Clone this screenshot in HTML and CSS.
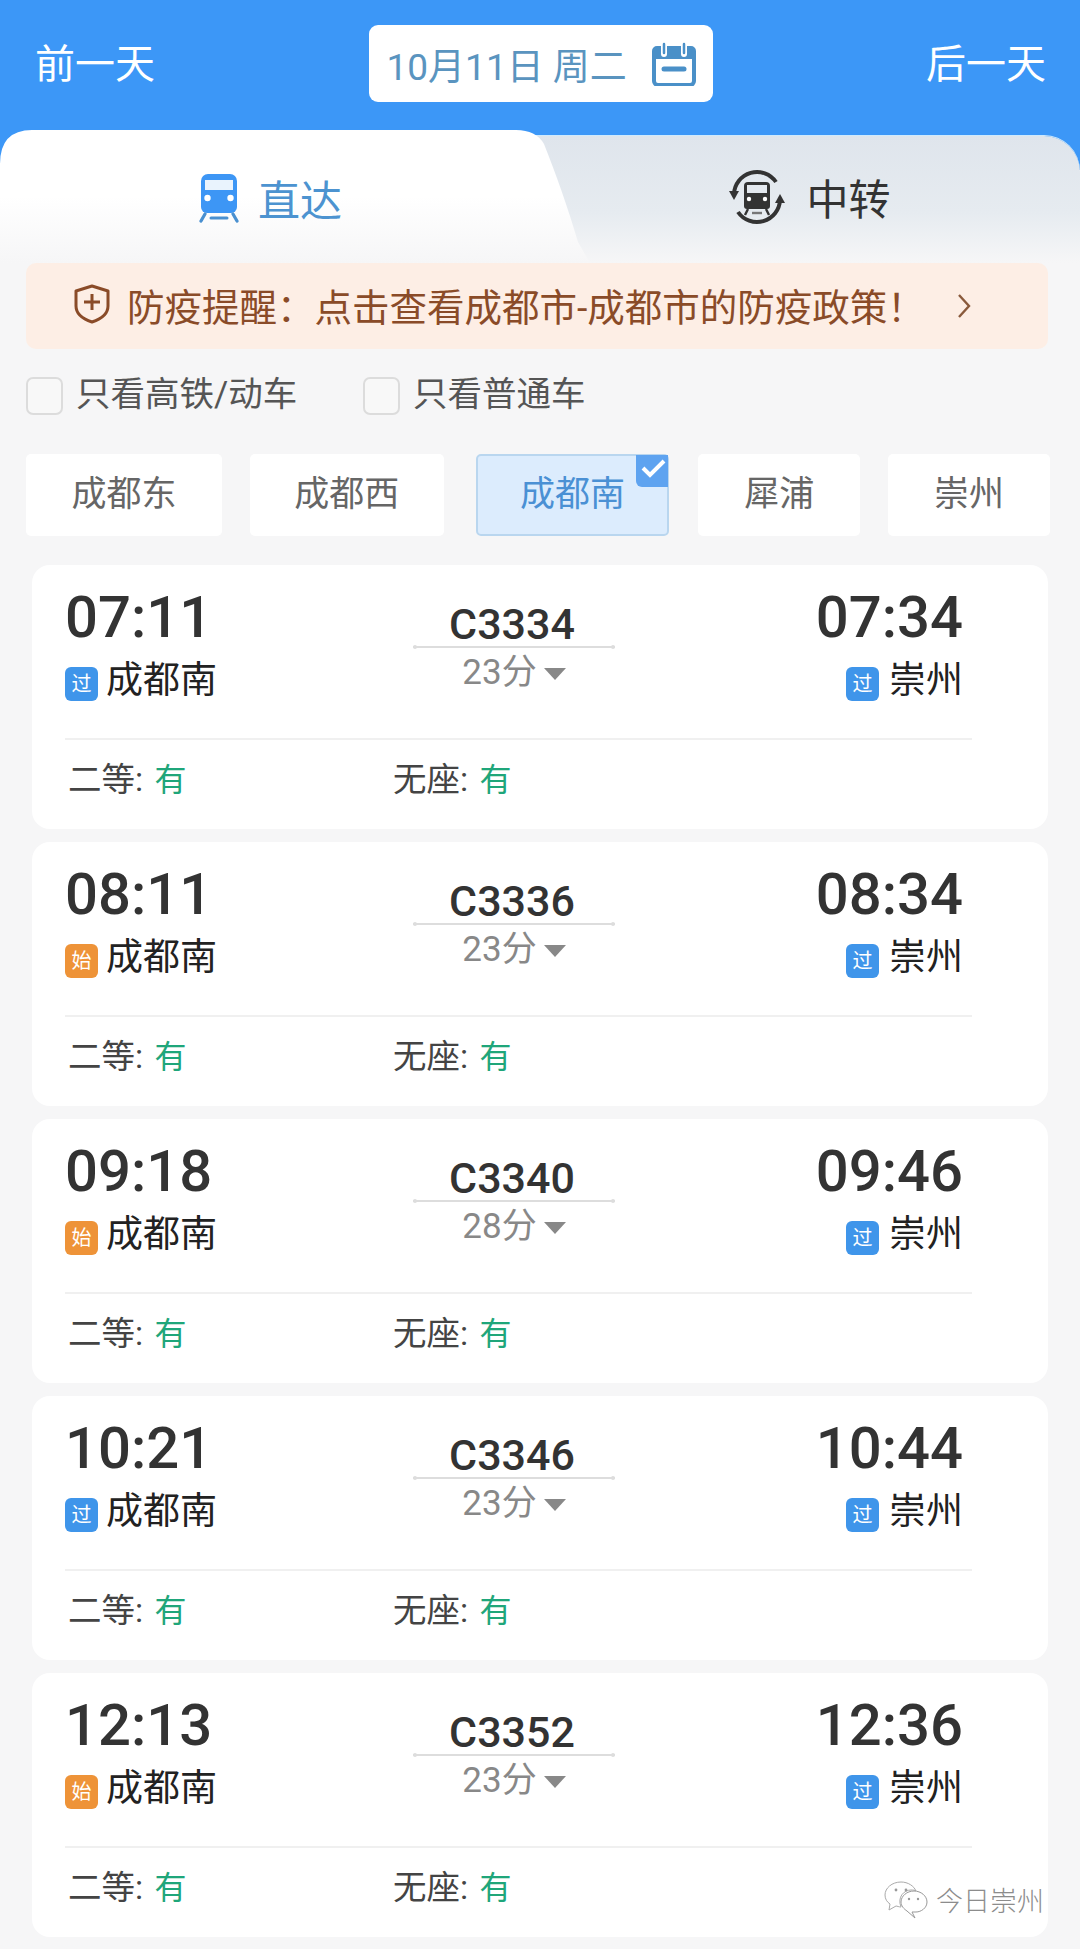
FILE: index.html
```html
<!DOCTYPE html>
<html lang="zh-CN">
<head>
    <meta charset="utf-8">
    <title>成都市-崇州 车次列表</title>
    <meta name="viewport" content="width=device-width, initial-scale=1">
    <link rel="stylesheet" href="styles.css">
</head>
<body>
    <header class="topbar">
        <span class="day-link">前一天</span>
        <div class="date-box">
            <span>10月11日 周二</span>
            <svg class="date-icon" viewBox="0 0 44 44" aria-hidden="true">
                <path d="M2 9a3 3 0 0 1 3-3h34a3 3 0 0 1 3 3v30a4 4 0 0 1-4 4H6a4 4 0 0 1-4-4z" fill="none" stroke="#4a90c8" stroke-width="4"/>
                <path d="M2 8h40v9H2z" fill="#4a90c8"/>
                <path d="M12 1v11M32 1v11" stroke="#fff" stroke-width="6" stroke-linecap="round"/>
                <path d="M12 2v9M32 2v9" stroke="#4a90c8" stroke-width="2.5" stroke-linecap="round"/>
                <path d="M12 27h20" stroke="#4a90c8" stroke-width="5" stroke-linecap="round"/>
            </svg>
        </div>
        <span class="day-link">后一天</span>
    </header>

    <nav class="tabs">
        <div class="tab tab-direct">
            <svg class="tab-icon-direct" viewBox="0 0 42 50" aria-hidden="true">
                <path d="M3 8a7 7 0 0 1 7-7h22a7 7 0 0 1 7 7v26a6 6 0 0 1-6 6H9a6 6 0 0 1-6-6z" fill="#3d96f5"/>
                <path d="M7 7h28v10H7z" fill="#e9f3fd"/>
                <circle cx="9.5" cy="25" r="3.2" fill="#fff"/>
                <circle cx="32.5" cy="25" r="3.2" fill="#fff"/>
                <path d="M7 41l-4 7M35 41l4 7" stroke="#4a90d0" stroke-width="3.2" stroke-linecap="round"/>
                <path d="M13 45h16" stroke="#4a90d0" stroke-width="3" stroke-linecap="round"/>
            </svg>
            <span>直达</span>
        </div>
        <div class="tab tab-transfer">
            <svg class="tab-icon-transfer" viewBox="0 0 56 56" aria-hidden="true">
                <path d="M5 25A23 23 0 0 1 47 13" fill="none" stroke="#333" stroke-width="4"/>
                <path d="M51 31A23 23 0 0 1 9 43" fill="none" stroke="#333" stroke-width="4"/>
                <path d="M0 22l5 9 5-9z" fill="#333"/>
                <path d="M46 34l5-9 5 9z" fill="#333"/>
                <path d="M15 17a4 4 0 0 1 4-4h18a4 4 0 0 1 4 4v20a3 3 0 0 1-3 3H18a3 3 0 0 1-3-3z" fill="#333"/>
                <path d="M18 16h20v8H18z" fill="#e4e9ef"/>
                <circle cx="20" cy="30" r="2.200" fill="#fff"/>
                <circle cx="36" cy="30" r="2.200" fill="#fff"/>
                <path d="M19 40l-3 6M37 40l3 6" stroke="#333" stroke-width="2.400"/>
                <path d="M23 44h10" stroke="#777" stroke-width="2.400"/>
            </svg>
            <span>中转</span>
        </div>
    </nav>

    <div class="notice">
        <svg class="notice-icon" viewBox="0 0 38 40" aria-hidden="true">
            <path d="M19 2l16 5v15c0 8-7 13-16 16C10 35 3 30 3 22V7z" fill="#fdeee5" stroke="#8a4b28" stroke-width="3" stroke-linejoin="round"/>
            <path d="M11 18h16M19 10v16" stroke="#8a4b28" stroke-width="3"/>
        </svg>
        <span class="notice-text">防疫提醒：点击查看成都市-成都市的防疫政策！</span>
        <svg class="notice-arrow" viewBox="0 0 14 26" aria-hidden="true">
            <path d="M2 2l10 11L2 24" fill="none" stroke="#8a5a3c" stroke-width="2.400"/>
        </svg>
    </div>

    <div class="filters">
        <label class="filter"><i class="checkbox"></i>只看高铁/动车</label>
        <label class="filter"><i class="checkbox"></i>只看普通车</label>
    </div>

    <div class="stations">
        <div class="station station-lg">成都东</div>
        <div class="station station-md">成都西</div>
        <div class="station station-md active">成都南
            <svg class="station-check" viewBox="0 0 32 32" aria-hidden="true">
                <path d="M0 0h32v32H6a6 6 0 0 1-6-6z" fill="#5ea3f0"/>
                <path d="M7 13l7 7L28 6" fill="none" stroke="#fff" stroke-width="4"/>
            </svg>
        </div>
        <div class="station station-sm">犀浦</div>
        <div class="station station-sm">崇州</div>
    </div>

    <main class="trains">
        <article class="train">
            <div class="route">
                <div class="stop">
                    <div class="time">07:11</div>
                    <div class="place"><b class="tag tag-pass">过</b><span>成都南</span></div>
                </div>
                <div class="middle">
                    <div class="train-no">C3334</div>
                    <div class="duration">23分<i class="caret"></i></div>
                </div>
                <div class="stop stop-end">
                    <div class="time">07:34</div>
                    <div class="place"><b class="tag tag-pass">过</b><span>崇州</span></div>
                </div>
            </div>
            <div class="seats">
                <div class="seat">二等: <em>有</em></div>
                <div class="seat">无座: <em>有</em></div>
            </div>
        </article>

        <article class="train">
            <div class="route">
                <div class="stop">
                    <div class="time">08:11</div>
                    <div class="place"><b class="tag tag-start">始</b><span>成都南</span></div>
                </div>
                <div class="middle">
                    <div class="train-no">C3336</div>
                    <div class="duration">23分<i class="caret"></i></div>
                </div>
                <div class="stop stop-end">
                    <div class="time">08:34</div>
                    <div class="place"><b class="tag tag-pass">过</b><span>崇州</span></div>
                </div>
            </div>
            <div class="seats">
                <div class="seat">二等: <em>有</em></div>
                <div class="seat">无座: <em>有</em></div>
            </div>
        </article>

        <article class="train">
            <div class="route">
                <div class="stop">
                    <div class="time">09:18</div>
                    <div class="place"><b class="tag tag-start">始</b><span>成都南</span></div>
                </div>
                <div class="middle">
                    <div class="train-no">C3340</div>
                    <div class="duration">28分<i class="caret"></i></div>
                </div>
                <div class="stop stop-end">
                    <div class="time">09:46</div>
                    <div class="place"><b class="tag tag-pass">过</b><span>崇州</span></div>
                </div>
            </div>
            <div class="seats">
                <div class="seat">二等: <em>有</em></div>
                <div class="seat">无座: <em>有</em></div>
            </div>
        </article>

        <article class="train">
            <div class="route">
                <div class="stop">
                    <div class="time">10:21</div>
                    <div class="place"><b class="tag tag-pass">过</b><span>成都南</span></div>
                </div>
                <div class="middle">
                    <div class="train-no">C3346</div>
                    <div class="duration">23分<i class="caret"></i></div>
                </div>
                <div class="stop stop-end">
                    <div class="time">10:44</div>
                    <div class="place"><b class="tag tag-pass">过</b><span>崇州</span></div>
                </div>
            </div>
            <div class="seats">
                <div class="seat">二等: <em>有</em></div>
                <div class="seat">无座: <em>有</em></div>
            </div>
        </article>

        <article class="train">
            <div class="route">
                <div class="stop">
                    <div class="time">12:13</div>
                    <div class="place"><b class="tag tag-start">始</b><span>成都南</span></div>
                </div>
                <div class="middle">
                    <div class="train-no">C3352</div>
                    <div class="duration">23分<i class="caret"></i></div>
                </div>
                <div class="stop stop-end">
                    <div class="time">12:36</div>
                    <div class="place"><b class="tag tag-pass">过</b><span>崇州</span></div>
                </div>
            </div>
            <div class="seats">
                <div class="seat">二等: <em>有</em></div>
                <div class="seat">无座: <em>有</em></div>
            </div>
            <div class="watermark">
                <svg class="watermark-icon" viewBox="0 0 44 38" aria-hidden="true">
                    <path d="M17 1C8 1 1 7 1 14c0 4 2 7 5 9l-1 6 7-4c1 0 3 1 5 1" fill="#fff" stroke="#aaa" stroke-width="1"/>
                    <path d="M17 26C13 16 20 9 27 9c2 0 4 0 5 1C30 5 24 1 17 1" fill="#fff" stroke="#aaa" stroke-width="1"/>
                    <path d="M30 10c7 0 13 5 13 11s-6 10-11 10c-1 0-3 0-4 0l3 6-8-7c-3-2-6-5-6-9 0-6 6-11 13-11z" fill="#fff" stroke="#999" stroke-width="1"/>
                    <circle cx="12" cy="9" r="1.400" fill="#999"/>
                    <circle cx="22" cy="9" r="1.400" fill="#999"/>
                    <circle cx="25" cy="18" r="1.200" fill="#999"/>
                    <circle cx="34" cy="18" r="1.200" fill="#999"/>
                </svg>
                <span>今日崇州</span>
            </div>
        </article>
    </main>
</body>
</html>
```
FILE: styles.css
```css
html, body {
    margin: 0;
    padding: 0;
}
body {
    width: 1080px;
    background-color: #f6f6f7;
    font-family: Roboto, "Noto Sans CJK SC", sans-serif;
    color: #333333;
}

/* top bar */
.topbar {
    display: flex;
    justify-content: space-between;
    box-sizing: border-box;
    height: 170px;
    padding: 25px 34px 0 35px;
    background-color: #3c97f7;
}
.day-link {
    height: 77px;
    line-height: 79px;
    font-size: 40px;
    color: #ffffff;
}
.date-box {
    display: flex;
    align-items: center;
    justify-content: space-between;
    box-sizing: border-box;
    width: 344px;
    height: 77px;
    padding: 0 17px 0 18px;
    border-radius: 9px;
    background-color: #ffffff;
    font-size: 37px;
    color: #5a94bf;
}
.date-icon {
    width: 44px;
    height: 44px;
}

/* tabs */
.tabs {
    display: grid;
    grid-template-columns: 540px 540px;
    height: 127px;
    margin-top: -34px;
    border-radius: 36px 36px 0 0;
    background: linear-gradient(#dfe5ec 0%, #e6ebf0 60%, #f6f6f7 100%);
    box-shadow: 0 -1px 0 #cfeafd;
}
.tab {
    display: flex;
    align-items: center;
    justify-content: center;
    gap: 18px;
    font-size: 42px;
}
.tab-direct {
    grid-column: 1;
    grid-row: 1;
    box-sizing: border-box;
    width: 590px;
    height: 133px;
    margin-top: -6px;
    padding: 2px 50px 0 0;
    background: linear-gradient(#ffffff 0%, #ffffff 50%, #f6f6f7 100%);
    clip-path: path("M0 34 Q0 0 32 0 H516 Q536 0 544 14 C556 44 568 78 578 112 L590 133 H0 Z");
    color: #4c93d0;
    position: relative;
}
.tab-transfer {
    grid-column: 2;
    grid-row: 1;
    gap: 21px;
    padding-bottom: 6px;
    color: #333333;
}
.tab-icon-direct {
    width: 42px;
    height: 50px;
}
.tab-icon-transfer {
    width: 56px;
    height: 56px;
}

/* notice */
.notice {
    display: flex;
    align-items: center;
    box-sizing: border-box;
    height: 86px;
    margin: 0 32px 0 26px;
    padding: 0 0 4px 47px;
    border-radius: 10px;
    background-color: #fdeee5;
    color: #8a4b28;
    font-size: 37.500px;
}
.notice-icon {
    flex: none;
    width: 38px;
    height: 40px;
    margin-right: 16px;
}
.notice-text {
    flex: none;
    width: 830px;
    white-space: nowrap;
}
.notice-arrow {
    width: 14px;
    height: 26px;
    margin-top: 4px;
}

/* filters */
.filters {
    display: flex;
    margin: 23px 0 0 26px;
}
.filter {
    display: flex;
    align-items: center;
    width: 337px;
    height: 38px;
    font-size: 34.500px;
    color: #555555;
}
.checkbox {
    flex: none;
    box-sizing: border-box;
    width: 37px;
    height: 38px;
    margin: 10px 13px 0 0;
    border: 2px solid #dcdcdc;
    border-radius: 7px;
    background-color: #f8f8f8;
}

/* station picker */
.stations {
    display: flex;
    gap: 28px;
    margin: 44px 30px 0 26px;
}
.station {
    display: flex;
    align-items: center;
    justify-content: center;
    box-sizing: border-box;
    height: 82px;
    padding-bottom: 9px;
    border-radius: 5px;
    background-color: #ffffff;
    font-size: 35px;
    color: #666666;
}
.station-lg {
    width: 196px;
}
.station-md {
    width: 194px;
}
.station-sm {
    width: 162px;
}
.station.active {
    position: relative;
    margin: 0 1px 0 4px;
    border: 2px solid #b9d6ef;
    background-color: #dcecfd;
    color: #4a90d4;
}
.station-check {
    position: absolute;
    top: -1px;
    right: -1px;
    width: 32px;
    height: 32px;
}

/* train cards */
.trains {
    display: flex;
    flex-direction: column;
    gap: 13px;
    margin: 29px 32px 0;
}
.train {
    position: relative;
    box-sizing: border-box;
    height: 264px;
    padding: 16px 76px 0 33px;
    border-radius: 18px;
    background-color: #ffffff;
}
.route {
    display: grid;
    grid-template-columns: 348px 202px 1fr;
    height: 157px;
}
.time {
    height: 66px;
    padding-top: 3px;
    line-height: 66px;
    font-size: 58px;
    font-weight: 500;
    color: #333333;
}
.place {
    display: flex;
    align-items: flex-start;
    gap: 8px;
    margin-top: 11px;
    line-height: 40px;
    font-size: 37px;
    color: #222222;
}
.stop-end {
    padding-right: 9px;
    text-align: right;
}
.stop-end .place {
    justify-content: flex-end;
    gap: 10px;
}
.tag {
    flex: none;
    width: 33px;
    height: 34px;
    margin-top: 6px;
    border-radius: 6px;
    line-height: 34px;
    text-align: center;
    font-size: 20px;
    font-weight: 400;
    color: #ffffff;
}
.tag-pass {
    background-color: #3f95ea;
}
.tag-start {
    background-color: #ee9338;
}
.middle {
    padding-top: 21px;
    text-align: center;
}
.train-no {
    position: relative;
    height: 44px;
    padding-right: 4px;
    line-height: 44px;
    border-bottom: 2px solid #dddddd;
    font-size: 43px;
    font-weight: 500;
    color: #333333;
}
.train-no::before,
.train-no::after {
    content: "";
    position: absolute;
    bottom: -3px;
    width: 4px;
    height: 4px;
    border-radius: 50%;
    background-color: #dddddd;
}
.train-no::before {
    left: 0;
}
.train-no::after {
    right: 0;
}
.duration {
    display: flex;
    align-items: center;
    justify-content: center;
    gap: 7px;
    height: 40px;
    font-size: 35px;
    color: #888888;
}
.caret {
    width: 0;
    height: 0;
    margin-top: 12px;
    border-style: solid;
    border-width: 12px 11px 0;
    border-color: #888888 transparent transparent;
}
.seats {
    display: flex;
    padding: 17px 0 0 3px;
    border-top: 2px solid #f0f0f0;
    line-height: 46px;
    font-size: 33.500px;
    color: #444444;
}
.seat {
    width: 325px;
}
.seat em {
    margin-left: 3px;
    font-style: normal;
    font-size: 32px;
    color: #1fa67a;
}

/* wechat watermark */
.watermark {
    position: absolute;
    right: 4px;
    bottom: 18px;
    display: flex;
    align-items: center;
    gap: 8px;
    font-size: 27px;
    font-weight: 300;
    color: #8c8c8c;
}
.watermark-icon {
    width: 44px;
    height: 38px;
}
```
